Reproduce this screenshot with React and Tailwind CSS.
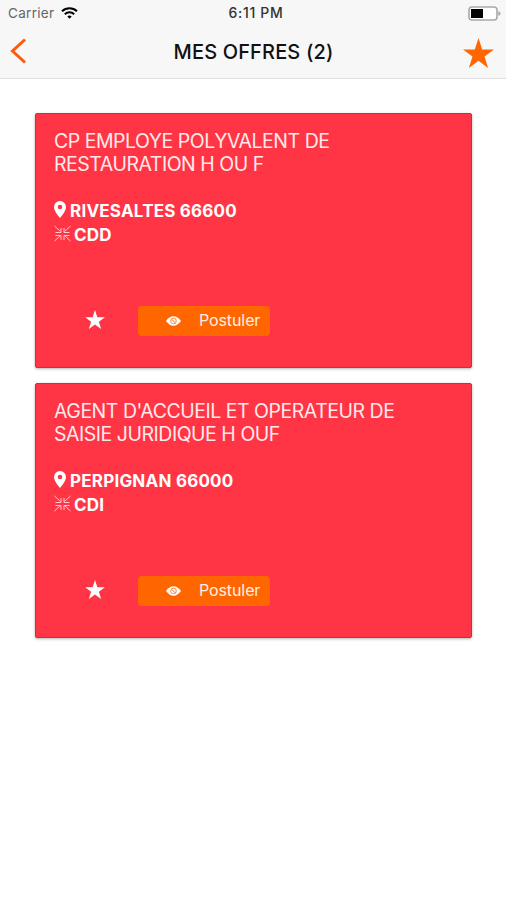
import React, {useState} from 'react';

const offers = [
  {
    id: 1,
    title: ['CP EMPLOYE POLYVALENT DE', 'RESTAURATION H OU F'],
    place: 'RIVESALTES 66600',
    contract: 'CDD'
  },
  {
    id: 2,
    title: ["AGENT D'ACCUEIL ET OPERATEUR DE", 'SAISIE JURIDIQUE H OUF'],
    place: 'PERPIGNAN 66000',
    contract: 'CDI'
  }
];

const StarIcon = ({className}) => (
  <svg viewBox="0 0 100 96" className={className} fill="currentColor">
    <path d="M50 0 62 36.5H100L69.5 59 81 96 50 73.3 19 96 30.5 59 0 36.5H38Z" />
  </svg>
);

const WifiIcon = ({className}) => (
  <svg viewBox="0 0 17 12" className={className} fill="none" stroke="currentColor">
    <path d="M1 4.3a10.8 10.8 0 0 1 15 0" strokeWidth="2" />
    <path d="M3.8 7.2a6.8 6.8 0 0 1 9.4 0" strokeWidth="1.9" />
    <path d="M8.5 11.8 6.3 9.6a3.2 3.2 0 0 1 4.4 0Z" fill="currentColor" stroke="none" />
  </svg>
);

const BatteryIcon = ({className}) => (
  <svg viewBox="0 0 33 15" className={className}>
    <rect x="1" y="1" width="28" height="13" rx="3" fill="#fff" stroke="#a9a9a9" strokeWidth="1.6" />
    <rect x="3" y="3" width="12" height="9" fill="#000" />
    <path d="M30.3 5.2c1.6.4 2.2 1.2 2.2 2.3s-.6 1.9-2.2 2.3Z" fill="#a9a9a9" />
  </svg>
);

const PinIcon = ({className}) => (
  <svg viewBox="0 0 12 17" className={className} fill="currentColor">
    <path
      fillRule="evenodd"
      d="M6 0a6 6 0 0 1 6 6c0 3.7-3.6 8-6 11C3.6 14 0 9.7 0 6a6 6 0 0 1 6-6Zm0 3.7a2.3 2.3 0 1 0 0 4.6 2.3 2.3 0 0 0 0-4.6Z"
    />
  </svg>
);

const ContractIcon = ({className}) => (
  <svg viewBox="0 0 17 17" className={className} fill="none" stroke="currentColor">
    <path d="M.5 1l6 5.5M16.5 1l-6 5.5M.5 16l6-5.5M16.5 16l-6-5.5" />
    <path d="M1.5 7.5h5.500V3M15.500 7.500H10V3M1.500 10.500h5.500v4.500M15.500 10.500H10v4.500" />
  </svg>
);

const EyeIcon = ({className}) => (
  <svg viewBox="0 0 16 10" className={className} fill="none">
    <path d="M0 5C2.5 1.600 5 0 8 0s5.500 1.600 8 5c-2.500 3.400-5 5-8 5S2.500 8.400 0 5Z" fill="currentColor" />
    <circle cx="8" cy="5" r="3" stroke="#ff6600" strokeWidth=".8" />
    <path d="M6.200 3.500 10 7" stroke="#ff6600" strokeWidth="1" />
  </svg>
);

const StatusBar = () => (
  <div className="grid grid-cols-3 items-center h-[26px] pl-2 pr-[5px] text-[13.5px]">
    <div className="flex items-center text-[#666]">
      <span className="tracking-[0.3px]">Carrier</span>
      <WifiIcon className="w-[17px] h-3 ml-[7px] text-black" />
    </div>
    <span className="text-center text-sm text-[#333] font-medium tracking-[0.7px] pl-[3px]">6:11 PM</span>
    <BatteryIcon className="w-[33px] h-[15px] justify-self-end" />
  </div>
);

const Header = () => (
  <header className="h-[79px] bg-[#f7f7f7] border-b border-[#dedede]">
    <StatusBar />
    <div className="flex items-center justify-between h-[52px] pl-[10px] pr-3">
      <button type="button" aria-label="Retour" className="w-[34px] text-[#ff5a0a]">
        <svg viewBox="0 0 16 26" className="w-4 h-[26px] -mt-[3px]" fill="none" stroke="currentColor" strokeWidth="3">
          <path d="M15 1.5 2.5 13 15 24.5" />
        </svg>
      </button>
      <h1 className="text-xl font-medium tracking-[0.15px] text-[#111]">MES OFFRES (2)</h1>
      <StarIcon className="w-[31px] h-[30px] mt-px text-[#ff6600]" />
    </div>
  </header>
);

const OfferCard = ({offer}) => {
  const [starred, setStarred] = useState(true);

  return (
    <article className="h-[255px] pt-4 pl-[18px] rounded-[2px] bg-[#ff3545] border border-[#f51c2c] text-white shadow-[0_1px_3px_rgba(0,0,0,0.3)]">
      <h2 className="text-[19.5px] leading-[23px] tracking-[-0.48px] text-[#ffe9eb] whitespace-nowrap">
        {offer.title.map(line => (
          <span key={line} className="block">
            {line}
          </span>
        ))}
      </h2>
      <div className="mt-[23px] text-[17px] leading-6 tracking-[0.22px] font-bold">
        <div className="flex items-center">
          <PinIcon className="w-3 h-[17px] mr-1 -mt-1" />
          {offer.place}
        </div>
        <div className="flex items-center">
          <ContractIcon className="w-[17px] h-[17px] mr-[3px] -mt-[3px] text-[#ffc9cd]" />
          {offer.contract}
        </div>
      </div>
      <div className="flex items-center mt-[59px] pl-[31px]">
        <button type="button" aria-label="Favori" className="-mt-[3px]" onClick={() => setStarred(!starred)}>
          <StarIcon className={`w-5 h-[19px] ${starred ? '' : 'opacity-50'}`} />
        </button>
        <button
          type="button"
          className="flex items-center w-[132px] h-[30px] ml-[33px] pl-7 rounded bg-[#ff6600]">
          <EyeIcon className="w-[15px] h-[10px] mr-[18px]" />
          <span className="text-base tracking-[-0.1px] text-[#fff0e5] -mt-[2px]">Postuler</span>
        </button>
      </div>
    </article>
  );
};

export default function App() {
  return (
    <div className="h-[900px] bg-white font-['Inter',sans-serif]">
      <Header />
      <main className="flex flex-col gap-[15px] pt-[34px] pl-[35px] pr-[34px]">
        {offers.map(offer => (
          <OfferCard key={offer.id} offer={offer} />
        ))}
      </main>
    </div>
  );
}
